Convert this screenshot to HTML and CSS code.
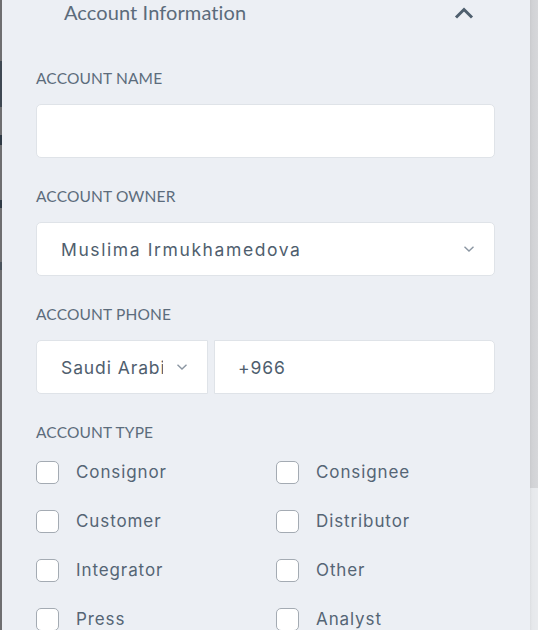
FILE: index.html
```html
<!DOCTYPE html>
<html>
<head>
<meta charset="utf-8">
<link rel="stylesheet" href="styles.css">
</head>
<body>
<div class="page">
  <div class="backdrop">
    <span class="bd-dark"></span>
    <span class="bd-glyph g1"></span>
    <span class="bd-glyph g2"></span>
    <span class="bd-glyph g3"></span>
  </div>
  <div class="panel">
    <div class="section-head">
      <span class="section-title">Account Information</span>
      <svg class="chev-up" width="20" height="14" viewBox="0 0 20 14"><path d="M2 11.5 L10 3.5 L18 11.5" fill="none" stroke="#4f5f6e" stroke-width="3"/></svg>
    </div>

    <div class="field">
      <div class="label">Account Name</div>
      <div class="box"></div>
    </div>

    <div class="field">
      <div class="label">Account Owner</div>
      <div class="box select">
        <span class="value">Muslima Irmukhamedova</span>
        <svg class="chev-down" width="12" height="8" viewBox="0 0 12 8"><path d="M1.5 1.8 L6 6 L10.5 1.8" fill="none" stroke="#8b96a2" stroke-width="1.4"/></svg>
      </div>
    </div>

    <div class="field">
      <div class="label">Account Phone</div>
      <div class="phone-row">
        <div class="box country">
          <span class="value clip">Saudi Arabia</span>
          <svg class="chev-down" width="12" height="8" viewBox="0 0 12 8"><path d="M1.5 1.8 L6 6 L10.5 1.8" fill="none" stroke="#8b96a2" stroke-width="1.4"/></svg>
        </div>
        <div class="box number">
          <span class="value">+966</span>
        </div>
      </div>
    </div>

    <div class="field">
      <div class="label">Account Type</div>
      <div class="checks">
        <div class="check"><span class="cb"></span><span class="cl">Consignor</span></div>
        <div class="check"><span class="cb"></span><span class="cl">Consignee</span></div>
        <div class="check"><span class="cb"></span><span class="cl">Customer</span></div>
        <div class="check"><span class="cb"></span><span class="cl">Distributor</span></div>
        <div class="check"><span class="cb"></span><span class="cl">Integrator</span></div>
        <div class="check"><span class="cb"></span><span class="cl">Other</span></div>
        <div class="check"><span class="cb"></span><span class="cl">Press</span></div>
        <div class="check"><span class="cb"></span><span class="cl">Analyst</span></div>
      </div>
    </div>
  </div>
  <div class="scrollbar">
    <div class="thumb"></div>
  </div>
</div>
</body>
</html>
```

FILE: styles.css
```css
* { box-sizing: border-box; }
html, body {
  margin: 0;
  padding: 0;
  width: 538px;
  height: 630px;
  overflow: hidden;
  background: #eceff4;
}
.page {
  display: flex;
  width: 538px;
  height: 630px;
}
.backdrop {
  width: 2px;
  flex: none;
  background: #6e6e70;
  position: relative;
}
.bd-dark {
  position: absolute;
  left: 0;
  top: 61px;
  width: 2px;
  height: 46px;
  background: #3e4852;
}
.bd-glyph {
  position: absolute;
  left: 0;
  width: 2px;
  background: #2f3a45;
}
.g1 { top: 135px; height: 10px; }
.g2 { top: 200px; height: 8px; }
.g3 { top: 262px; height: 8px; background: #4a535c; }
.panel {
  flex: 1;
  min-width: 0;
  padding: 0 35px 0 34px;
  background: #eceff4;
}
.section-head {
  height: 25px;
  display: flex;
  align-items: center;
  justify-content: space-between;
  padding: 0 21px 0 28px;
}
.section-title {
  font-family: Lato, "Liberation Sans", sans-serif;
  font-size: 20px;
  letter-spacing: 0.1px;
  color: #5b6b7b;
  line-height: 25px;
}
.chev-up { display: block; margin-top: 1px; }
.field { margin-top: 43px; }
.field + .field { margin-top: 28px; }
.label {
  font-family: Lato, "Liberation Sans", sans-serif;
  font-size: 15.5px;
  letter-spacing: 0.15px;
  line-height: 20px;
  text-transform: uppercase;
  color: #5c6c7c;
  margin-bottom: 16px;
}
.box {
  height: 54px;
  background: #fff;
  border: 1px solid #dfe3e8;
  border-radius: 5px;
  display: flex;
  align-items: center;
  padding-left: 24px;
}
.select { justify-content: space-between; padding-right: 19px; }
.value {
  font-family: Inter, "Noto Sans", sans-serif;
  font-size: 17.5px;
  letter-spacing: 1.6px;
  color: #4f5e6e;
  white-space: nowrap;
}
.chev-down { display: block; flex: none; }
.phone-row {
  display: flex;
  gap: 6px;
}
.country {
  width: 172px;
  flex: none;
  border-radius: 5px 0 0 5px;
  padding-right: 19px;
}
.country .clip {
  width: 107px;
  overflow: hidden;
  margin-right: 13px;
  letter-spacing: 0.9px;
}
.number {
  flex: 1;
  border-radius: 0 5px 5px 0;
  padding-left: 23px;
}
.number .value { letter-spacing: 0.9px; }
.checks {
  display: grid;
  grid-template-columns: 240px 1fr;
  row-gap: 27px;
  margin-top: 19px;
}
.check {
  display: flex;
  align-items: center;
  height: 22px;
}
.cb {
  width: 23px;
  height: 23px;
  border: 1px solid #a4abb3;
  border-radius: 5px;
  background: #fff;
  flex: none;
  margin-right: 17px;
}
.cl {
  font-family: Inter, "Noto Sans", sans-serif;
  font-size: 17px;
  letter-spacing: 0.9px;
  color: #556575;
}
.scrollbar {
  width: 8px;
  flex: none;
  background: linear-gradient(to right, #dcdee1 0, #e6e8eb 2px, #e9ebee 100%);
}
.thumb {
  height: 488px;
  background: linear-gradient(to right, #c9cacd 0, #d1d2d5 2px, #d6d7da 100%);
}
```
